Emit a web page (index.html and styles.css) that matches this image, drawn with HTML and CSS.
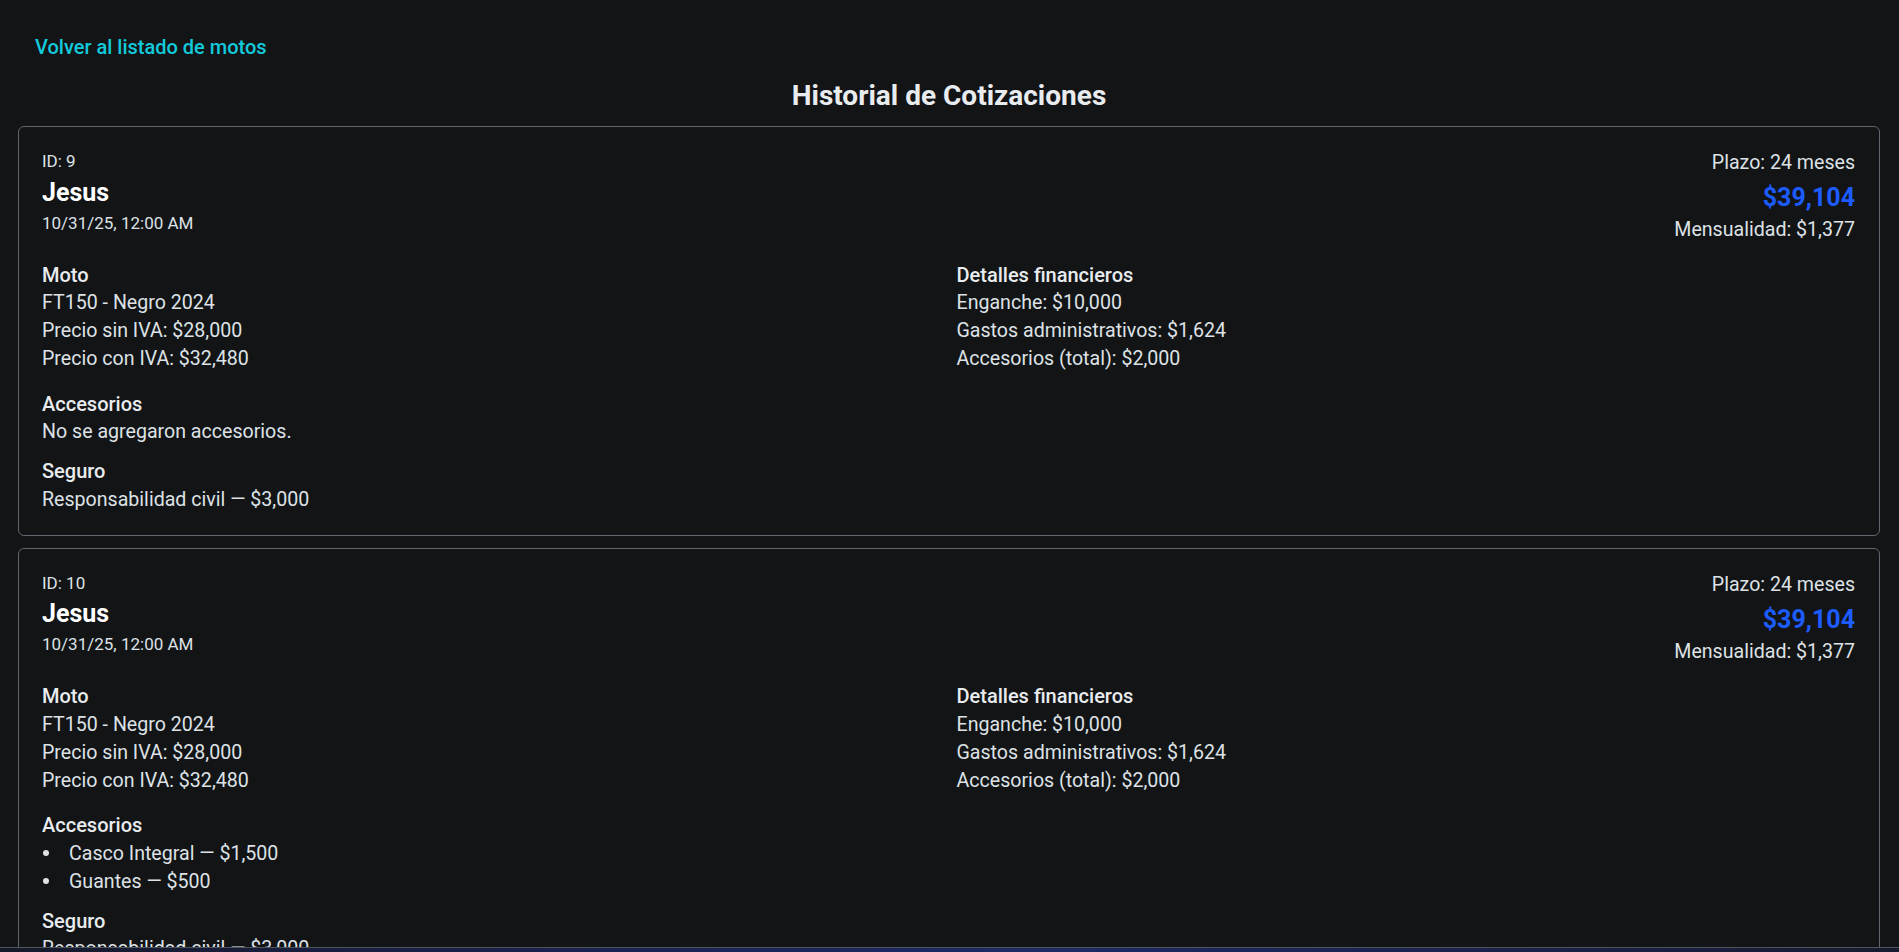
FILE: index.html
```html
<!DOCTYPE html>
<html lang="es">
<head>
<meta charset="utf-8">
<title>Historial de Cotizaciones</title>
<link rel="stylesheet" href="styles.css">
</head>
<body>
<div class="page">
  <nav class="top-nav">
    <a class="back-link" href="#">Volver al listado de motos</a>
  </nav>
  <h1 class="page-title">Historial de Cotizaciones</h1>

  <div class="quote-list">
    <article class="quote-card">
      <header class="quote-head">
        <div class="quote-who">
          <div class="quote-meta">ID: 9</div>
          <div class="quote-name">Jesus</div>
          <div class="quote-meta quote-date">10/31/25, 12:00 AM</div>
        </div>
        <div class="quote-sums">
          <div class="quote-term">Plazo: 24 meses</div>
          <div class="quote-total">$39,104</div>
          <div class="quote-monthly">Mensualidad: $1,377</div>
        </div>
      </header>
      <div class="quote-cols">
        <section class="quote-sec">
          <h2 class="sec-title">Moto</h2>
          <p class="sec-line">FT150 - Negro 2024</p>
          <p class="sec-line">Precio sin IVA: $28,000</p>
          <p class="sec-line">Precio con IVA: $32,480</p>
        </section>
        <section class="quote-sec">
          <h2 class="sec-title">Detalles financieros</h2>
          <p class="sec-line">Enganche: $10,000</p>
          <p class="sec-line">Gastos administrativos: $1,624</p>
          <p class="sec-line">Accesorios (total): $2,000</p>
        </section>
      </div>
      <section class="quote-block">
        <h2 class="sec-title">Accesorios</h2>
        <p class="sec-line">No se agregaron accesorios.</p>
      </section>
      <section class="quote-block quote-block-last">
        <h2 class="sec-title">Seguro</h2>
        <p class="sec-line">Responsabilidad civil — $3,000</p>
      </section>
    </article>

    <article class="quote-card">
      <header class="quote-head">
        <div class="quote-who">
          <div class="quote-meta">ID: 10</div>
          <div class="quote-name">Jesus</div>
          <div class="quote-meta quote-date">10/31/25, 12:00 AM</div>
        </div>
        <div class="quote-sums">
          <div class="quote-term">Plazo: 24 meses</div>
          <div class="quote-total">$39,104</div>
          <div class="quote-monthly">Mensualidad: $1,377</div>
        </div>
      </header>
      <div class="quote-cols">
        <section class="quote-sec">
          <h2 class="sec-title">Moto</h2>
          <p class="sec-line">FT150 - Negro 2024</p>
          <p class="sec-line">Precio sin IVA: $28,000</p>
          <p class="sec-line">Precio con IVA: $32,480</p>
        </section>
        <section class="quote-sec">
          <h2 class="sec-title">Detalles financieros</h2>
          <p class="sec-line">Enganche: $10,000</p>
          <p class="sec-line">Gastos administrativos: $1,624</p>
          <p class="sec-line">Accesorios (total): $2,000</p>
        </section>
      </div>
      <section class="quote-block">
        <h2 class="sec-title">Accesorios</h2>
        <ul class="acc-list">
          <li class="acc-item">Casco Integral — $1,500</li>
          <li class="acc-item">Guantes — $500</li>
        </ul>
      </section>
      <section class="quote-block quote-block-last">
        <h2 class="sec-title">Seguro</h2>
        <p class="sec-line">Responsabilidad civil — $3,000</p>
      </section>
    </article>
  </div>
</div>
<div class="bottom-bar"></div>
</body>
</html>
```

FILE: styles.css
```css
html {
  scrollbar-width: none;
}
html::-webkit-scrollbar {
  display: none;
}
body {
  margin: 0;
  background: #121416;
  color: #dee2e6;
  font-family: Roboto, "Liberation Sans", Arial, sans-serif;
  font-size: 19.6px;
  line-height: 28px;
}
.page {
  padding: 0 19px 40px 18px;
}
.top-nav {
  padding: 33px 0 0 17px;
}
.back-link {
  display: inline-block;
  color: #12cadb;
  text-decoration: none;
  font-weight: 500;
  font-size: 20px;
  line-height: 28px;
}
.page-title {
  margin: 15.5px 0 12.5px;
  text-align: center;
  font-size: 28px;
  line-height: 36px;
  font-weight: 700;
  color: #e9ecef;
}
.quote-list {
  display: flex;
  flex-direction: column;
  gap: 12px;
}
.quote-card {
  border: 1px solid #5f6670;
  border-radius: 6px;
  padding: 22px 24px 21px 23px;
}
.quote-head {
  display: flex;
  justify-content: space-between;
  align-items: flex-start;
  margin-bottom: 16.5px;
}
.quote-meta {
  font-size: 17px;
  line-height: 24.5px;
  color: #dee2e6;
}
.quote-name {
  margin: 4px 0 3px;
  font-size: 25px;
  line-height: 30px;
  font-weight: 700;
  color: #ffffff;
}
.quote-sums {
  text-align: right;
}
.quote-total {
  margin: 6px 0 3px;
  font-size: 25px;
  line-height: 30px;
  font-weight: 700;
  color: #1d5cff;
}
.quote-cols {
  display: grid;
  grid-template-columns: 1fr 1fr;
  gap: 16px;
  margin-bottom: 16.5px;
}
.sec-title {
  margin: 0 0 0.5px;
  font-size: 20px;
  line-height: 28px;
  font-weight: 500;
  color: #e9ecef;
}
.sec-line {
  margin: 0;
}
.quote-block {
  margin-bottom: 11px;
}
.quote-block-last {
  margin-bottom: 0;
}
.acc-list {
  list-style: none;
  margin: 0;
  padding: 0;
}
.acc-item {
  display: flex;
}
.acc-item::before {
  content: "";
  flex: 0 0 6px;
  height: 6px;
  margin: 10.5px 20px 0 1px;
  border-radius: 50%;
  background: #dee2e6;
}
.bottom-bar {
  position: fixed;
  left: 0;
  right: 0;
  bottom: 0;
  height: 4px;
  border-top: 1px solid #50555e;
  background: linear-gradient(90deg, #16192a 0%, #1a2454 35%, #1c2a66 55%, #171b30 100%);
}
```
